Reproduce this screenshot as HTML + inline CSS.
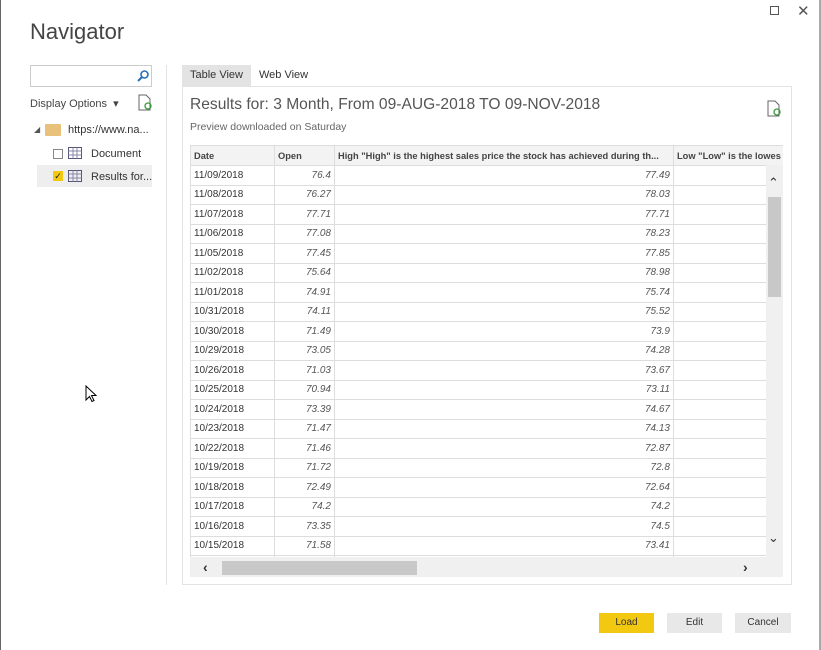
<!DOCTYPE html>
<html><head><style>
*{margin:0;padding:0;box-sizing:border-box}
body{width:821px;height:650px;background:#fff;font-family:"Liberation Sans",sans-serif;position:relative;overflow:hidden;color:#333}
.a{position:absolute}
table{border-collapse:collapse;font-size:10px;position:absolute;left:190px;top:145px;table-layout:fixed;width:593px}
td{border:1px solid #ddd;height:19.5px;padding:0 3px;white-space:nowrap;overflow:hidden;color:#333}
td.n{text-align:right;font-style:italic;color:#555}
tr.h td{background:#f3f3f3;font-weight:bold;color:#444;height:20px;font-size:9.3px}
</style></head><body>
<div class="a" style="left:0;top:0;width:1px;height:650px;background:#666"></div>
<div class="a" style="right:0;top:0;width:2px;height:650px;background:#aaa"></div>
<div class="a" style="left:770px;top:6px;width:9px;height:9px;border:1px solid #555"></div>
<div class="a" style="left:797px;top:2px;font-size:15px;color:#555">✕</div>
<div class="a" style="left:30px;top:19px;font-size:22px;color:#444">Navigator</div>
<div class="a" style="left:30px;top:65px;width:122px;height:22px;border:1px solid #ccc"></div>
<svg class="a" style="left:136px;top:69px" width="14" height="14"><circle cx="8.5" cy="5.5" r="3.5" fill="none" stroke="#2b6fb6" stroke-width="1.6"/><line x1="6" y1="8" x2="2" y2="12" stroke="#2b6fb6" stroke-width="2"/></svg>
<div class="a" style="left:30px;top:97px;font-size:11px;color:#444">Display Options &nbsp;▾</div>
<svg class="a" style="left:137px;top:94px" width="16" height="17"><path d="M2 1h7l4 4v11H2z" fill="none" stroke="#666"/><circle cx="11" cy="12" r="3" fill="none" stroke="#3a9a3a" stroke-width="1.3"/></svg>
<div class="a" style="left:34px;top:125px;font-size:8px;color:#555">◢</div>
<div class="a" style="left:45px;top:124px;width:16px;height:12px;background:#e8c27a;border-radius:1px"></div>
<div class="a" style="left:68px;top:124px;font-size:11px;color:#333">https://www.na...</div>
<div class="a" style="left:53px;top:149px;width:10px;height:10px;border:1px solid #888"></div>
<svg class="a" style="left:68px;top:147px" width="14" height="12"><rect x=".5" y=".5" width="13" height="11" fill="none" stroke="#557"/><path d="M.5 4h13M.5 8h13M5 .5v11M9 .5v11" stroke="#88a"/></svg>
<div class="a" style="left:91px;top:148px;font-size:11px;color:#333">Document</div>
<div class="a" style="left:37px;top:165px;width:115px;height:22px;background:#eee"></div>
<div class="a" style="left:53px;top:171px;width:10px;height:10px;background:#f2c811;color:#222;font-size:9px;line-height:10px;text-align:center">✓</div>
<svg class="a" style="left:68px;top:170px" width="14" height="12"><rect x=".5" y=".5" width="13" height="11" fill="none" stroke="#557"/><path d="M.5 4h13M.5 8h13M5 .5v11M9 .5v11" stroke="#88a"/></svg>
<div class="a" style="left:91px;top:171px;font-size:11px;color:#333">Results for...</div>
<div class="a" style="left:166px;top:65px;width:1px;height:520px;background:#e4e4e4"></div>
<div class="a" style="left:182px;top:65px;width:69px;height:21px;background:#e3e3e3;font-size:11px;padding:4px 0 0 8px;color:#333">Table View</div>
<div class="a" style="left:259px;top:69px;font-size:11px;color:#333">Web View</div>
<div class="a" style="left:182px;top:86px;width:610px;height:499px;border:1px solid #e3e3e3"></div>
<div class="a" style="left:190px;top:96px;font-size:15.6px;color:#555">Results for: 3 Month, From 09-AUG-2018 TO 09-NOV-2018</div>
<div class="a" style="left:190px;top:121px;font-size:10.5px;color:#666">Preview downloaded on Saturday</div>
<svg class="a" style="left:766px;top:100px" width="16" height="17"><path d="M2 1h7l4 4v11H2z" fill="none" stroke="#666"/><circle cx="11" cy="12" r="3" fill="none" stroke="#3a9a3a" stroke-width="1.3"/></svg>
<div class="a" style="left:190px;top:145px;width:593px;height:412px;overflow:hidden">
<table style="left:0;top:0">
<colgroup><col style="width:84px"><col style="width:60px"><col style="width:339px"><col style="width:110px"></colgroup>
<tr class="h"><td>Date</td><td>Open</td><td>High "High" is the highest sales price the stock has achieved during th...</td><td>Low "Low" is the lowes</td></tr>
<tr><td>11/09/2018</td><td class="n">76.4</td><td class="n">77.49</td><td></td></tr>
<tr><td>11/08/2018</td><td class="n">76.27</td><td class="n">78.03</td><td></td></tr>
<tr><td>11/07/2018</td><td class="n">77.71</td><td class="n">77.71</td><td></td></tr>
<tr><td>11/06/2018</td><td class="n">77.08</td><td class="n">78.23</td><td></td></tr>
<tr><td>11/05/2018</td><td class="n">77.45</td><td class="n">77.85</td><td></td></tr>
<tr><td>11/02/2018</td><td class="n">75.64</td><td class="n">78.98</td><td></td></tr>
<tr><td>11/01/2018</td><td class="n">74.91</td><td class="n">75.74</td><td></td></tr>
<tr><td>10/31/2018</td><td class="n">74.11</td><td class="n">75.52</td><td></td></tr>
<tr><td>10/30/2018</td><td class="n">71.49</td><td class="n">73.9</td><td></td></tr>
<tr><td>10/29/2018</td><td class="n">73.05</td><td class="n">74.28</td><td></td></tr>
<tr><td>10/26/2018</td><td class="n">71.03</td><td class="n">73.67</td><td></td></tr>
<tr><td>10/25/2018</td><td class="n">70.94</td><td class="n">73.11</td><td></td></tr>
<tr><td>10/24/2018</td><td class="n">73.39</td><td class="n">74.67</td><td></td></tr>
<tr><td>10/23/2018</td><td class="n">71.47</td><td class="n">74.13</td><td></td></tr>
<tr><td>10/22/2018</td><td class="n">71.46</td><td class="n">72.87</td><td></td></tr>
<tr><td>10/19/2018</td><td class="n">71.72</td><td class="n">72.8</td><td></td></tr>
<tr><td>10/18/2018</td><td class="n">72.49</td><td class="n">72.64</td><td></td></tr>
<tr><td>10/17/2018</td><td class="n">74.2</td><td class="n">74.2</td><td></td></tr>
<tr><td>10/16/2018</td><td class="n">73.35</td><td class="n">74.5</td><td></td></tr>
<tr><td>10/15/2018</td><td class="n">71.58</td><td class="n">73.41</td><td></td></tr>
<tr><td>&nbsp;</td><td></td><td></td><td></td></tr>
</table></div>
<div class="a" style="left:766px;top:165px;width:17px;height:392px;background:#f0f0f0"></div>
<div class="a" style="left:768px;top:197px;width:13px;height:100px;background:#c8c8c8"></div>
<div class="a" style="left:768px;top:175px;font-size:13px;color:#333">⌃</div>
<div class="a" style="left:768px;top:530px;font-size:13px;color:#333">⌄</div>
<div class="a" style="left:190px;top:557px;width:593px;height:20px;background:#f0f0f0"></div>
<div class="a" style="left:222px;top:561px;width:195px;height:14px;background:#c8c8c8"></div>
<div class="a" style="left:203px;top:559px;font-size:14px;color:#333;font-weight:bold">‹</div>
<div class="a" style="left:743px;top:559px;font-size:14px;color:#333;font-weight:bold">›</div>
<div class="a" style="left:599px;top:613px;width:55px;height:20px;background:#f2c811;font-size:10px;text-align:center;line-height:20px;color:#333">Load</div>
<div class="a" style="left:667px;top:613px;width:55px;height:20px;background:#e8e8e8;font-size:10px;text-align:center;line-height:20px;color:#333">Edit</div>
<div class="a" style="left:735px;top:613px;width:56px;height:20px;background:#e8e8e8;font-size:10px;text-align:center;line-height:20px;color:#333">Cancel</div>
<svg class="a" style="left:85px;top:385px" width="12" height="18"><path d="M1 1v14l3.5-3.5 2.5 5 2-1-2.5-5H11z" fill="#fff" stroke="#000"/></svg>
</body></html>
